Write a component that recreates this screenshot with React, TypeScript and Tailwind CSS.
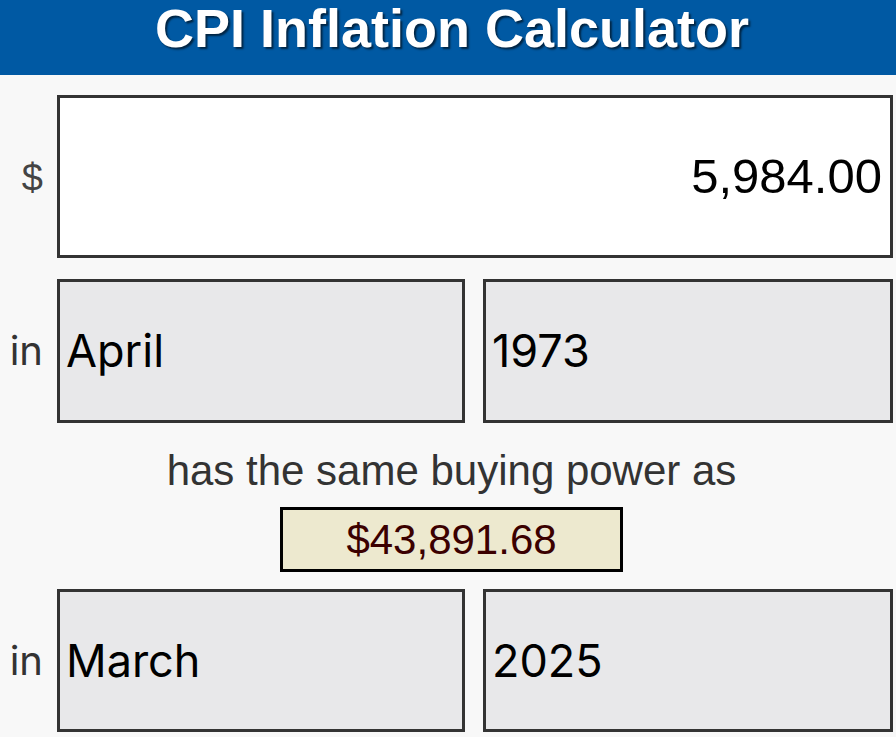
import React from 'react';

const Box: React.FC<{ value: string; className?: string }> = ({ value, className = '' }) => (
    <div className={`h-full border-[3px] border-[#333] bg-[#e8e8ea] flex items-center pl-[6px] text-[45px] text-black ${className}`}>
        {value}
    </div>
);

const Label: React.FC<{ children: React.ReactNode }> = ({ children }) => (
    <div className="w-[57px] shrink-0 pr-[14px] text-right text-[40px] text-[#333]">{children}</div>
);

export default function App() {
    return (
        <div className="min-h-screen bg-[#f8f8f8] font-['Inter',sans-serif]">
            <header className="h-[75px] bg-[#0059a3] pl-[8px] text-center">
                <h1 className="text-[54px] leading-[56px] font-bold text-white font-['Liberation_Sans',Arial,sans-serif] [text-shadow:2px_2px_2px_rgba(0,0,0,0.6)]">
                    CPI Inflation Calculator
                </h1>
            </header>

            <div className="pr-[3px]">
                <div className="mt-[20px] flex items-center h-[163px]">
                    <Label>
                        <span className="font-['Liberation_Sans',Arial,sans-serif] text-[38px] text-[#444]">$</span>
                    </Label>
                    <div className="flex-1 h-full border-[3px] border-[#333] bg-white flex items-center justify-end pr-[8px] text-[49px] text-black font-['Liberation_Sans',Arial,sans-serif]">
                        5,984.00
                    </div>
                </div>

                <div className="mt-[21px] flex items-center h-[144px]">
                    <Label>in</Label>
                    <div className="flex-1 h-full flex gap-[18px]">
                        <Box value="April" className="w-[408px]" />
                        <Box value="1973" className="flex-1" />
                    </div>
                </div>

                <div className="pl-[10px] text-center">
                    <p className="mt-[24px] text-[42px] leading-[48px] text-[#333] font-['Liberation_Sans',Arial,sans-serif]">
                        has the same buying power as
                    </p>
                    <div className="mt-[12px] flex justify-center">
                        <div className="w-[343px] h-[65px] border-[3px] border-black bg-[#ede9cf] flex items-center justify-center text-[42px] text-[#3b0000] font-['Liberation_Sans',Arial,sans-serif]">
                            $43,891.68
                        </div>
                    </div>
                </div>

                <div className="mt-[17px] flex items-center h-[143px]">
                    <Label>in</Label>
                    <div className="flex-1 h-full flex gap-[18px]">
                        <Box value="March" className="w-[408px]" />
                        <Box value="2025" className="flex-1" />
                    </div>
                </div>
            </div>
        </div>
    );
}
